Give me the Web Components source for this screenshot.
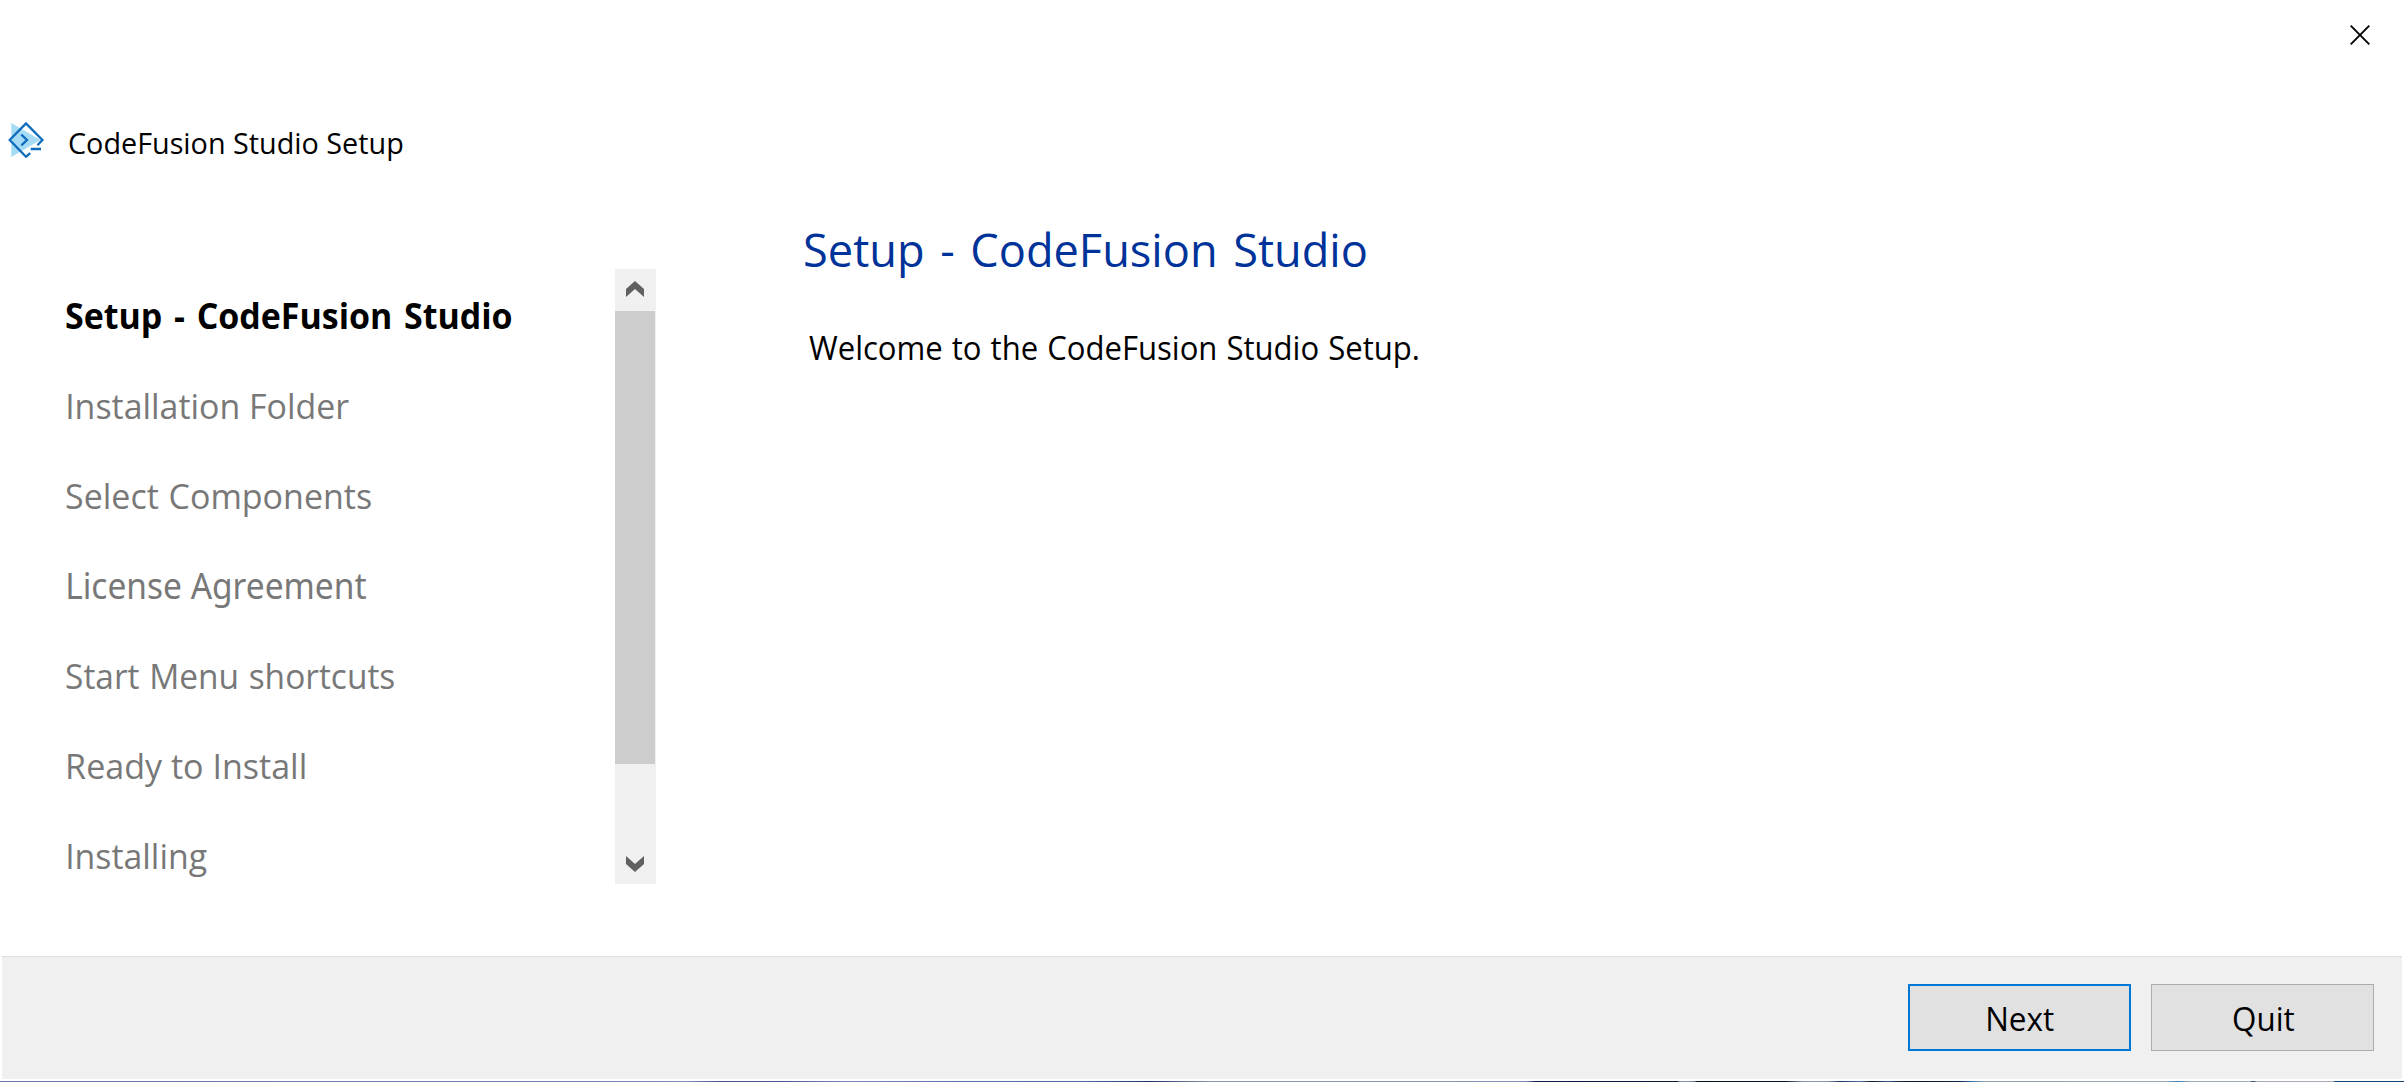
<!DOCTYPE html>
<html lang="en">
<head>
<meta charset="utf-8">
<title>CodeFusion Studio Setup</title>
<style>
html,body{margin:0;height:100%;background:#fff;overflow:hidden}
body{font-family:"Open Sans","Noto Sans",sans-serif;color:#000}
</style>
</head>
<body>
<setup-window></setup-window>
<script>
const define = (name, html, setup) => {
  const t = document.createElement('template');
  t.innerHTML = html;
  customElements.define(name, class extends HTMLElement {
    connectedCallback() {
      if (this.shadowRoot) return;
      this.attachShadow({mode: 'open'}).append(t.content.cloneNode(true));
      if (setup) setup(this);
    }
  });
};

// A single line whose drawn width is given by the "width" attribute.
define('fit-text', `<style>
:host{display:block;white-space:nowrap;overflow:visible}
span{display:inline-block;transform-origin:0 50%}
</style><span><slot></slot></span>`, el => {
  const w = +el.getAttribute('width');
  const size = +el.getAttribute('size');
  const family = el.getAttribute('face') || 'Open Sans';
  const weight = el.getAttribute('weight') || 400;
  const spacing = (el.getAttribute('spacing') || 0) + 'px';
  el.style.width = w + 'px';
  el.style.font = `${weight} ${size}px "${family}", sans-serif`;
  el.style.lineHeight = (el.getAttribute('line') || 50) + 'px';
  el.style.wordSpacing = spacing;
  const c = document.createElement('canvas').getContext('2d');
  c.font = `${weight} ${size}px "${family}"`;
  c.wordSpacing = spacing;
  const text = el.getAttribute('sample') || el.textContent;
  const m = c.measureText(text);
  const ink = m.actualBoundingBoxLeft + m.actualBoundingBoxRight;
  el.shadowRoot.querySelector('span').style.transform = `scaleX(${w / ink}) translateX(${m.actualBoundingBoxLeft}px)`;
});

define('close-button', `<style>:host{display:block;width:20px;height:20px}svg{display:block}</style>
<svg width="20" height="20" viewBox="0 0 20 20"><path d="M.7.7l18.6 18.6M19.3.7L.7 19.3" stroke="#000" stroke-width="1.9" fill="none"/></svg>`);

define('app-logo', `<style>:host{display:block;width:36px;height:36px}svg{display:block}</style>
<svg width="36" height="36" viewBox="8 122 36 36"><path d="M11.3 123L40.5 140 11.3 157z" fill="#a6dbf5"/>
<path d="M30.3 153.2L26 156.7 9.7 140 26 123.4 42.4 140 37.4 145.2" fill="none" stroke="#0f6cbd" stroke-width="2.3"/>
<path d="M29.5 146.5h12v5h-12z" fill="#fff"/>
<path d="M21.3 134.6L27 140l-5.7 5.4M30.7 149H41" fill="none" stroke="#0f6cbd" stroke-width="2.3"/></svg>`);

define('title-bar', `<style>
:host{display:flex;flex-direction:column;height:183px;box-sizing:border-box;padding-top:25px}
.top{display:flex;justify-content:flex-end;padding-right:34px;height:20px}
.name{display:flex;margin-top:77px;padding-left:8px;gap:24.5px}
fit-text{margin-top:-4px}
</style><div class="top"><close-button></close-button></div>
<div class="name"><app-logo></app-logo><fit-text width="334" size="29">CodeFusion Studio Setup</fit-text></div>`);

define('scroll-bar', `<style>
:host{display:flex;flex-direction:column;width:41px;height:615px;background:#f0f0f0}
.thumb{width:40px;height:453px;background:#cdcdcd}
.rest{flex:1}
svg{display:block}
</style><svg width="41" height="42" viewBox="615 269 41 42"><path d="M626 297v-8l9-8 9 8v8l-9-8z" fill="#606060"/></svg>
<div class="thumb"></div><div class="rest"></div>
<svg width="41" height="42" viewBox="615 842 41 42"><path d="M626 856v8l9 8 9-8v-8l-9 8z" fill="#606060"/></svg>`);

define('step-list', `<style>
:host{display:flex;flex-direction:column;gap:40px;padding-top:21px;width:549px;box-sizing:border-box;color:#787878}
fit-text{height:50px}
.s{margin-left:.4px}.i{margin-left:1.7px}
.on{color:#000}
</style>
<fit-text class="on" width="445.7" size="35.5" weight="700" spacing="3">Setup - CodeFusion Studio</fit-text>
<fit-text class="i" width="280.7" size="35.5">Installation Folder</fit-text>
<fit-text class="s" width="305.2" size="35.5" spacing="1">Select Components</fit-text>
<fit-text class="i" width="298.7" size="35.5" face="Noto Sans">License Agreement</fit-text>
<fit-text class="s" width="328.4" size="35.5" spacing="1">Start Menu shortcuts</fit-text>
<fit-text class="i" width="236.4" size="35.5">Ready to Install</fit-text>
<fit-text class="i" width="138.8" size="35.5">Installing</fit-text>`);

define('welcome-page', `<style>
:host{display:flex;flex-direction:column;padding:41px 0 0 149px}
.h{color:#039}
.p{margin:49px 0 0 4px}
</style><fit-text class="h" width="561" size="46.5" line="50" spacing="4">Setup - CodeFusion Studio</fit-text>
<fit-text class="p" width="609.5" size="32.5" spacing="1">Welcome to the CodeFusion Studio Setup.</fit-text>`);

define('push-button', `<style>
:host{display:flex;width:223px;height:67px;box-sizing:border-box;justify-content:center;background:#e1e1e1;border:1px solid #adadad;padding:9px 0 0 2px}
:host([primary]){border:2px solid #0078d7;padding:8px 0 0 3px}
</style><slot></slot>`);

define('button-bar', `<style>
:host{display:flex;justify-content:flex-end;gap:20px;height:123px;box-sizing:border-box;margin:0 2px;padding:27px 28px 0 0;background:#f0f0f0;border-top:1px solid #dfdfdf}
</style><slot></slot>`);

define('desktop-edge', `<style>
:host{display:block;height:1px;margin-top:2px;background:linear-gradient(90deg,#6a76a5 0,#7182b0 600px,#7f90bd 685px,#46558c 720px,#485a94 780px,#7889ba 850px,#566eaa 970px,#536da8 1080px,#1d3565 1150px,#8998b9 1210px,#8195bc 1500px,#7c8fb9 1526px,#0c204c 1536px,#091a40 1677px,#8395b8 1680px,#7284a9 1694px,#030c20 1697px,#061538 1785px,#8398bc 1803px,#8497ba 1828px,#152f59 1840px,#5276a3 1860px,#071830 1872px,#395b86 1888px,#101f43 1900px,#071631 1920px,#0c264c 1960px,#397cac 1973px,#8fa4bb 1985px,#98a9bd 2165px,#377fb3 2178px,#9aabc0 2190px,#9cabc0 2250px,#174267 2253px,#a5adbf 2257px,#a5adbf 2333px,#134674 2335px,#124777 2404px)}
</style>`);

define('setup-window', `<style>
:host{display:flex;flex-direction:column;width:2404px;height:1082px;background:#fff;overflow:hidden}
main{display:flex;height:773px;box-sizing:border-box}
.side{display:flex;margin-top:86px;padding-left:66px}
</style>
<title-bar></title-bar>
<main><div class="side"><step-list></step-list><scroll-bar></scroll-bar></div><welcome-page></welcome-page></main>
<button-bar><push-button primary><fit-text width="65.5" size="33">Next</fit-text></push-button><push-button><fit-text width="60" size="33">Quit</fit-text></push-button></button-bar>
<desktop-edge></desktop-edge>`);
</script>
</body>
</html>
